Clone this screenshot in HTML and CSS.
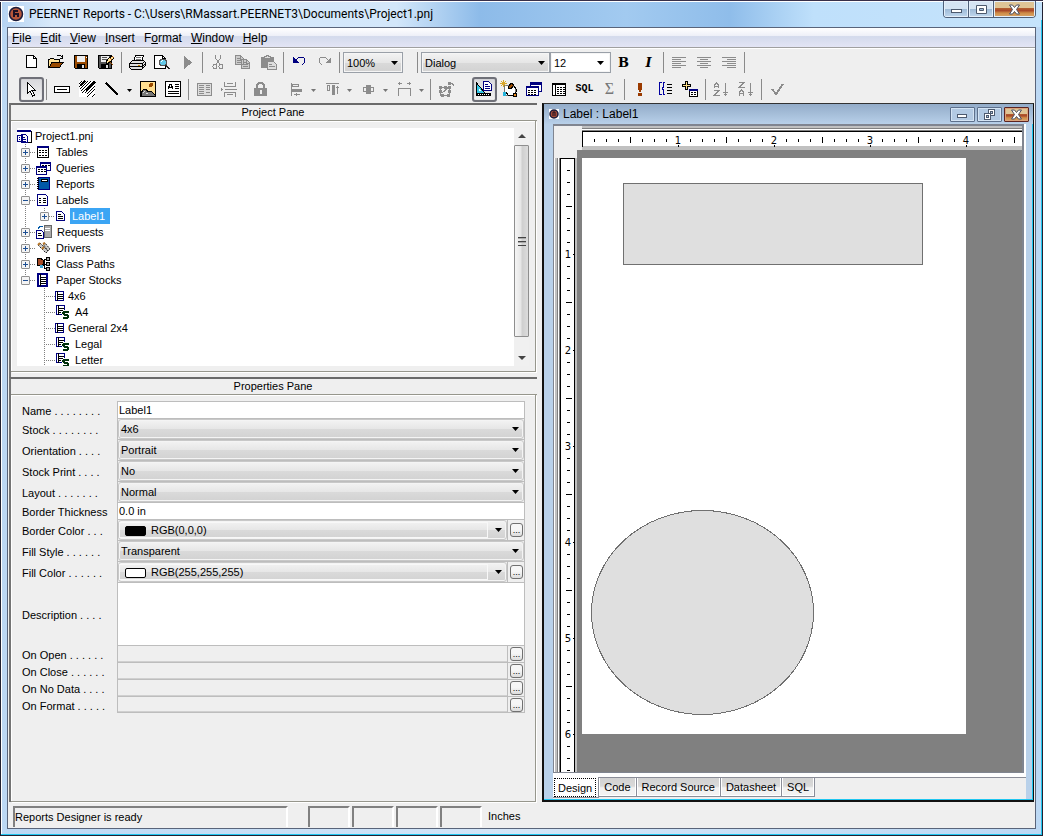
FILE: index.html
```html
<!DOCTYPE html>
<html lang="en">
<head>
<meta charset="utf-8">
<title>PEERNET Reports</title>
<link rel="stylesheet" href="styles.css">
</head>
<body>
<header class="titlebar">
  <svg class="app-logo" width="16" height="16" viewBox="0 0 16 16"><rect width="16" height="16" fill="#fff"/><circle cx="8" cy="8" r="6.5" fill="#b5563a" stroke="#1b1c3c" stroke-width="1.5"/><path d="M6 11V5h4M6 8h4v3" fill="none" stroke="#1b1024" stroke-width="2"/></svg>
  <h1 class="title">PEERNET Reports - C:\Users\RMassart.PEERNET3\Documents\Project1.pnj</h1>
  <div class="win-buttons">
    <button class="win-btn" aria-label="Minimize"><svg width="13" height="9" viewBox="0 0 13 9"><rect x="1.5" y="4.500" width="10" height="3" fill="#fff" stroke="#4d5a6e"/></svg></button>
    <button class="win-btn" aria-label="Maximize"><svg width="13" height="11" viewBox="0 0 13 11"><path d="M1.500 1.500h10v8h-10zM4.500 4.500v2h4v-2z" fill="#fff" fill-rule="evenodd" stroke="#4d5a6e"/></svg></button>
    <button class="win-btn close" aria-label="Close"><svg width="13" height="11" viewBox="0 0 13 11"><path d="M1.500 1h3l2 2.500L8.500 1h3L8.500 5.500l3 4.500h-3l-2-2.500-2 2.500h-3l3-4.500z" fill="#fff" stroke="#4d5060"/></svg></button>
  </div>
</header>

<main class="app">
  <nav class="menubar">
    <a href="#"><u>F</u>ile</a><a href="#"><u>E</u>dit</a><a href="#"><u>V</u>iew</a><a href="#"><u>I</u>nsert</a><a href="#">F<u>o</u>rmat</a><a href="#"><u>W</u>indow</a><a href="#"><u>H</u>elp</a>
  </nav>

  <div class="toolbars">
    <div class="toolbar">
      <button class="tool" aria-label="New"><svg class="ic" viewBox="0 0 19 19"><path d="M4.500 2.500h7l3 3v9h-10z" fill="#fff" stroke="#000"/><path d="M11.500 2.500v3h3" fill="none" stroke="#000"/></svg></button>
      <button class="tool" aria-label="Open"><svg class="ic" viewBox="0 0 19 19"><path d="M1.500 14V6.500h1l1-1h3l1 1h5V9" fill="#ffe39a" stroke="#000"/><path d="M2 14.500l3-5h11l-3.500 5z" fill="#9a4a00" stroke="#000"/><path d="M9.500 3.500l1-1h3l2 2M15.500 2v3h-3" fill="none" stroke="#000"/></svg></button>
      <button class="tool" aria-label="Save"><svg class="ic" viewBox="0 0 19 19"><path d="M2.500 2.500h13v13h-12l-1-1z" fill="#9a4a00" stroke="#000"/><rect x="5" y="3" width="8" height="6" fill="#eee"/><rect x="5" y="11" width="8" height="5"/><rect x="10" y="12" width="2" height="3" fill="#ddd"/><rect x="14" y="4" width="1" height="1" fill="#fff"/></svg></button>
      <button class="tool" aria-label="Save as"><svg class="ic" viewBox="0 0 19 19"><path d="M1.500 2.500h13v13h-12l-1-1z" fill="#555" stroke="#000"/><rect x="4" y="3" width="8" height="6" fill="#eee"/><path d="M5 4.500h5M5 6.500h5" stroke="#555"/><rect x="4" y="11" width="8" height="5"/><rect x="9" y="12" width="2" height="3" fill="#ddd"/><path d="M9 9l2-3 4-3 2 2-4 4-3 2z" fill="#ffe39a" stroke="#000"/><path d="M13 5l2 2M15 3l2 2M12 8l4 4" stroke="#9a4a00"/></svg></button>
      <span class="sep"></span>
      <button class="tool" aria-label="Print"><svg class="ic" viewBox="0 0 19 19"><path d="M5.500 8.500l2-6h8l-2 6z" fill="#fff" stroke="#000"/><path d="M8 4.500h5M7.500 6.500h5" stroke="#777"/><path d="M1.500 10.500l3-3h11l1.500 1.500v4l-3 3H3l-1.500-1.500z" fill="#ddd" stroke="#000"/><path d="M2 10.500h12l3-2M2 13.500h12l3-2M14.500 10v5" fill="none" stroke="#000"/><rect x="10" y="11.500" width="2" height="1" fill="#c80"/></svg></button>
      <button class="tool" aria-label="Print preview"><svg class="ic" viewBox="0 0 19 19"><path d="M1.500 2.500h8l3 3v10h-11z" fill="#fff" stroke="#000"/><path d="M9.500 2.500v3h3" fill="none" stroke="#000"/><circle cx="10" cy="9.500" r="3.500" fill="#62c8e8" stroke="#555"/><path d="M8 9l2-2" stroke="#fff"/><path d="M12.500 12l4 4" stroke="#222" stroke-width="2"/></svg></button>
      <button class="tool" aria-label="Run"><svg class="ic" viewBox="0 0 19 19"><path d="M6 3l8 6.500L6 16z" fill="#8c8c8c"/></svg></button>
      <span class="sep"></span>
      <button class="tool" aria-label="Cut"><svg class="ic dim" viewBox="0 0 19 19"><path d="M6.500 2v3l4 6M11.500 2v3l-4 6"/><circle cx="6" cy="13.500" r="2"/><circle cx="12" cy="13.500" r="2"/></svg></button>
      <button class="tool" aria-label="Copy"><svg class="ic dim" viewBox="0 0 19 19"><path d="M1.500 2.500h5l3 3v6h-8zM7.500 6.500h5l3 3v6h-8z" fill="#ccc"/><path d="M3 5.500h3M3 7.500h4M3 9.500h4M9 9.500h3M9 11.500h5M9 13.500h5M6.500 3v3h3M12.500 7v3h3"/></svg></button>
      <button class="tool" aria-label="Paste"><svg class="ic dim" viewBox="0 0 19 19"><path d="M2.500 4.500h12v10h-12z" fill="#8c8c8c"/><path d="M5.500 5V3.500h1.500l1-1h1l1 1h1.500V5z" fill="#ddd"/><path d="M8.500 8.500h6l3 3v5h-9z" fill="#ddd"/><path d="M10 11.500h3M10 13.500h6"/></svg></button>
      <span class="sep"></span>
      <button class="tool" aria-label="Undo"><svg class="ic" viewBox="0 0 19 19"><path d="M3 4v6h6z" fill="#000080"/><path d="M5 8l3-3 3-1 3 1 1 2-1 3-2 2" fill="none" stroke="#000080"/></svg></button>
      <button class="tool" aria-label="Redo"><svg class="ic dim" viewBox="0 0 19 19"><path d="M16 4v6h-6z" fill="#8c8c8c" stroke="none"/><path d="M14 8l-3-3-3-1-3 1-1 2 1 3 2 2"/></svg></button>
      <span class="sep"></span>
      <select class="combo zoom-combo" aria-label="Zoom"><option>100%</option></select>
      <span class="sep"></span>
      <select class="combo font-combo" aria-label="Font"><option>Dialog</option></select>
      <select class="combo size-combo" aria-label="Font size"><option>12</option></select>
      <button class="tool bold">B</button>
      <button class="tool italic">I</button>
      <span class="sep"></span>
      <button class="tool" aria-label="Align left"><svg class="ic dim" viewBox="0 0 19 19"><path d="M2 4.500h14M2 6.500h9M2 8.500h14M2 10.500h9M2 12.500h14M2 14.500h9"/></svg></button>
      <button class="tool" aria-label="Align center"><svg class="ic dim" viewBox="0 0 19 19"><path d="M2 4.500h14M5 6.500h8M2 8.500h14M5 10.500h8M2 12.500h14M5 14.500h8"/></svg></button>
      <button class="tool" aria-label="Align right"><svg class="ic dim" viewBox="0 0 19 19"><path d="M2 4.500h14M7 6.500h9M2 8.500h14M7 10.500h9M2 12.500h14M7 14.500h9"/></svg></button>
      <span class="sep"></span>
    </div>
    <div class="toolbar">
      <button class="tool on" aria-label="Select"><svg class="ic" viewBox="0 0 19 19"><path d="M5.500 2.500v11l2.500-2.500 2.500 5 2-1-2.500-4.500h3.500z" fill="#fff" stroke="#000"/></svg></button>
      <span class="sep"></span>
      <button class="tool" aria-label="Field"><svg class="ic" viewBox="0 0 19 19"><path d="M1.500 6.500h15v6h-15z" fill="#fff" stroke="#000"/><path d="M4 9.500h10" stroke="#000"/></svg></button>
      <button class="tool" aria-label="Shape"><svg class="ic" viewBox="0 0 19 19"><rect x="1" y="1" width="16" height="16" fill="#fff"/><path d="M1 4l3-3M1 7l6-6M2 9l8-8M3 11L13 1M4 13L16 1M7 13L17 3M9 14l8-8M11 15l6-6M14 17l3-3M9 17l3-3" stroke="#000" stroke-width="1.300"/><path d="M7 1L2 6M17 2L8 11" stroke="#000" stroke-width="2"/></svg></button>
      <button class="tool" aria-label="Line"><svg class="ic" viewBox="0 0 19 19"><path d="M3 3l12 12" stroke="#000" stroke-width="2"/></svg></button>
      <button class="drop" aria-label="Line options"></button>
      <button class="tool" aria-label="Image"><svg class="ic" viewBox="0 0 19 19"><rect x="1.500" y="1.500" width="15" height="15" fill="#ffdf91" stroke="#000"/><circle cx="12" cy="5" r="2" fill="#9a4a00"/><path d="M2 13l3-4 2 0 2 3 3-1 4 4v1H2z" fill="#777" stroke="#000"/><path d="M4 13l2-2M7 14l2-1" stroke="#ddd"/></svg></button>
      <button class="tool" aria-label="Text"><svg class="ic" viewBox="0 0 19 19"><rect x="1.500" y="1.500" width="15" height="15" fill="#fff" stroke="#000"/><path d="M4 9l2-5h1l2 5M5 7.500h3M11 4.500h4M11 6.500h4M11 8.500h4M4 11.500h11M4 13.500h11" fill="none" stroke="#000"/></svg></button>
      <span class="sep"></span>
      <button class="tool" aria-label="Form"><svg class="ic dim" viewBox="0 0 19 19"><rect x="2.500" y="3.500" width="14" height="12" fill="#ddd"/><path d="M4 5.500h5M4 7.500h5M4 9.500h5M4 11.500h5M4 13.500h5M11 5.500h4M11 7.500h4M11 9.500h4M11 12.500h4"/></svg></button>
      <button class="tool" aria-label="Page break"><svg class="ic dim" viewBox="0 0 19 19"><path d="M4.500 2v4.500h11V2M4.500 17v-4.500h11V17M7 3.500h6M7 14.500h6M5 9.500h12"/><path d="M1 7v5l2-2.500z" fill="#8c8c8c" stroke="none"/></svg></button>
      <span class="sep"></span>
      <button class="tool" aria-label="Lock"><svg class="ic dim" viewBox="0 0 19 19"><path d="M6 8V5l2-2h3l2 2v3" stroke-width="2"/><rect x="3" y="8" width="13" height="8" fill="#8c8c8c" stroke="none"/><rect x="9" y="10" width="2" height="4" fill="#eee" stroke="none"/></svg></button>
      <span class="gap"></span>
      <button class="tool" aria-label="Align edges"><svg class="ic dim" viewBox="0 0 19 19"><path d="M4.500 3v13"/><rect x="5.500" y="4.500" width="6" height="2"/><rect x="5.500" y="9.500" width="9" height="2" fill="#8c8c8c"/><path d="M7 14.500h6M9 13v3"/></svg></button>
      <button class="drop off" aria-label="Align options"></button>
      <button class="tool" aria-label="Align tops"><svg class="ic dim" viewBox="0 0 19 19"><path d="M3 3.500h13"/><rect x="4.500" y="5.500" width="2" height="5"/><rect x="9.500" y="5.500" width="2" height="9" fill="#8c8c8c"/><path d="M14.500 6v8M13 7.500h3"/></svg></button>
      <button class="drop off" aria-label="Top options"></button>
      <button class="tool" aria-label="Center"><svg class="ic dim" viewBox="0 0 19 19"><rect x="4.500" y="7.500" width="10" height="4"/><rect x="7.500" y="5.500" width="4" height="8" fill="#8c8c8c"/></svg></button>
      <button class="drop off" aria-label="Center options"></button>
      <button class="tool" aria-label="Space"><svg class="ic dim" viewBox="0 0 19 19"><path d="M3.500 16V8.500h12V16M3 3.500h4M12 3.500h4M4.500 2v3M14.500 2v3"/></svg></button>
      <button class="drop off" aria-label="Space options"></button>
      <span class="sep"></span>
      <button class="tool" aria-label="Group"><svg class="ic dim" viewBox="0 0 19 19"><path d="M3.500 7.500h9v8h-9zM5 13l6-5"/><path d="M2 6h3v3H2zM7 6h3v3H7zM11 6h3v3h-3zM2 10h3v3H2zM11 10h3v3h-3zM4 14h3v3H4zM10 14h3v3h-3zM11 2h3v3h-3z" fill="#8c8c8c" stroke="none"/><path d="M11 3.500h4l2 2"/></svg></button>
      <span class="gap wide"></span>
      <button class="tool on" aria-label="Design view"><svg class="ic" viewBox="0 0 19 19"><path d="M1.500 3l9 10.500h-9z" fill="#35c7e6" stroke="#000"/><path d="M4 9v2h2z" fill="#fff"/><rect x="1" y="13" width="15" height="3"/><path d="M3 14.500h12" stroke="#fff" stroke-dasharray="1 1"/><path d="M8.500 1.500h5l3 3v6h-8z" fill="#fff" stroke="#000080"/><path d="M10 4.500h3M10 6.500h5M10 8.500h5" stroke="#000080"/></svg></button>
      <button class="tool" aria-label="Wizard"><svg class="ic" viewBox="0 0 19 19"><path d="M4.500 5.500h8l3 3v7h-11z" fill="#fff" stroke="#777"/><path d="M1 1l5 5M6 1L1 6M3.500 0v7M0 3.500h7" stroke="#d9a72a"/><path d="M8 8l3-5 3 2-3 4z" fill="#9a4a00" stroke="#000"/><path d="M14 6l2 3v3l-3 3H8l-2-3" fill="none" stroke="#000"/><rect x="3" y="12" width="3" height="4" fill="#25b4dc"/><rect x="13" y="13" width="3" height="3" fill="#e68a1e" stroke="#000"/></svg></button>
      <button class="tool" aria-label="Queries view"><svg class="ic" viewBox="0 0 19 19"><rect x="5.500" y="2.500" width="11" height="9" fill="#fff" stroke="#000080"/><rect x="5" y="2" width="12" height="3" fill="#000080"/><rect x="1.500" y="6.500" width="12" height="9" fill="#fff" stroke="#000080"/><rect x="1" y="6" width="13" height="2" fill="#000080"/><path d="M3 10.500h9M3 12.500h9M3 14.500h9" stroke="#000" stroke-dasharray="2 1"/></svg></button>
      <button class="tool" aria-label="Datasheet view"><svg class="ic" viewBox="0 0 19 19"><rect x="2.500" y="3.500" width="13" height="12" fill="#fff" stroke="#000"/><path d="M2 4.500h14M5.500 4v12" stroke="#000"/><path d="M7 7.500h8M7 9.500h8M7 11.500h8M7 13.500h8" stroke="#000" stroke-dasharray="2 1"/></svg></button>
      <button class="tool sql">SQL</button>
      <button class="tool sigma">Σ</button>
      <span class="sep"></span>
      <button class="tool" aria-label="Execute"><svg class="ic" viewBox="0 0 19 19"><path d="M7 3h4v5l-1 4H8L7 8zM7 13h4v3H7z" fill="#9a3a00"/></svg></button>
      <button class="tool" aria-label="Expressions"><svg class="ic" viewBox="0 0 19 19"><path d="M6 2.500H3.500v12H6M9 2.500H7.500v4l-1 2 1 2v4H9" fill="none" stroke="#0000a0"/><path d="M11 4.500h5M11 7.500h5M11 10.500h5M11 13.500h5" stroke="#000"/></svg></button>
      <button class="tool" aria-label="Add table"><svg class="ic" viewBox="0 0 19 19"><path d="M4.500 1.500h2v3h3v2h-3v3h-2v-3h-3v-2h3z" fill="#ffe08a" stroke="#000"/><rect x="8.500" y="9.500" width="8" height="7" fill="#fff" stroke="#000"/><rect x="8" y="9" width="9" height="2" fill="#000080"/><path d="M10 12.500h5M10 14.500h5" stroke="#000" stroke-dasharray="2 1"/></svg></button>
      <span class="sep"></span>
      <button class="tool" aria-label="Sort ascending"><svg class="ic dim" viewBox="0 0 19 19"><path d="M2.500 8V5l2-2 2 2v3M3 6.500h3M2 10.500h5l-5 5h6M13.500 3v13M11 12.500h5M12 14.500h3"/></svg></button>
      <button class="tool" aria-label="Sort descending"><svg class="ic dim" viewBox="0 0 19 19"><path d="M2.500 16v-4l2-2 2 2v4M3 13.500h3M2 2.500h5l-5 5h6M13.500 3v13M11 12.500h5M12 14.500h3"/></svg></button>
      <span class="sep"></span>
      <button class="tool" aria-label="Check"><svg class="ic dim" viewBox="0 0 19 19"><path d="M4 9l4 5L15 4" stroke-width="2"/></svg></button>
    </div>
  </div>

  <div class="workspace">
    <div class="panes">
      <section class="pane">
        <h2>Project Pane</h2>
        <div class="pane-body tree-body">
          <div class="tree">
            <div class="node root"><svg width="15" height="15" viewBox="0 0 15 15" class="px"><path d="M1 2.500h13v11H9" fill="none" stroke="#000"/><rect y="1" width="14" height="2" fill="#000080"/><path d="M.5 6.500h5v6h-5zM4.500 5.500h4l2 2v6h-6z" fill="#fff" stroke="#000080"/><path d="M6 8.500h2M6 10.500h3M6 12h3M2 8.500h1M2 10.500h1" stroke="#000080"/></svg><span>Project1.pnj</span></div>
            <ul>
              <li><div class="node"><button class="exp plus" aria-label="Expand"></button><i></i><svg width="16" height="14" viewBox="0 0 16 14" class="px"><rect x="1.500" y="1.500" width="11" height="11" fill="#fff" stroke="#000"/><rect x="1" y="1" width="12" height="2" fill="#000080"/><path d="M3 5h9M3 7.500h9M3 10h9" stroke="#000" stroke-dasharray="2 1"/></svg><span>Tables</span></div></li>
              <li><div class="node"><button class="exp plus" aria-label="Expand"></button><i></i><svg width="16" height="14" viewBox="0 0 16 14" class="px"><rect x="4.500" y="1.500" width="10" height="8" fill="#fff" stroke="#000080"/><rect x="4" y="1" width="11" height="2" fill="#000080"/><path d="M6 4.500h8" stroke="#000" stroke-dasharray="2 1"/><rect x=".5" y="5.500" width="10" height="8" fill="#fff" stroke="#000080"/><rect y="5" width="11" height="2" fill="#000080"/><path d="M2 8.500h8M2 10.500h8" stroke="#000" stroke-dasharray="2 1"/></svg><span>Queries</span></div></li>
              <li><div class="node"><button class="exp plus" aria-label="Expand"></button><i></i><svg width="16" height="14" viewBox="0 0 16 14" class="px"><rect x="2.500" y=".5" width="11" height="12" fill="#0058a8" stroke="#000080"/><path d="M1.500 1v12" stroke="#000" stroke-width="2" stroke-dasharray="1 1"/><rect x="5" y="2" width="7" height="3" fill="#000"/><path d="M6 3.500h5" stroke="#fff"/></svg><span>Reports</span></div></li>
              <li><div class="node"><button class="exp minus" aria-label="Collapse"></button><i></i><svg width="16" height="14" viewBox="0 0 16 14" class="px"><path d="M1.500 1.500h8l2 2v9h-10z" fill="#fff" stroke="#000080"/><path d="M3 5.500h2M3 7.500h2M3 9.500h2M7 5.500h3M7 7.500h3M7 9.500h3" stroke="#000"/></svg><span>Labels</span></div>
                <ul>
                  <li><div class="node"><button class="exp plus" aria-label="Expand"></button><i></i><svg width="13" height="12" viewBox="0 0 13 12" class="px"><path d="M1.500 1.500h5l3 3v6h-8z" fill="#fff" stroke="#000080"/><path d="M3 4.500h3M3 6.500h5M3 8.500h5" stroke="#000"/></svg><span class="sel">Label1</span></div></li>
                </ul></li>
              <li><div class="node"><button class="exp plus" aria-label="Expand"></button><i></i><svg width="17" height="16" viewBox="0 0 17 16" class="px"><rect x="8" y="1" width="7" height="12" fill="#aaa" stroke="#666"/><path d="M9 4h5M9 6h5" stroke="#fff"/><path d="M2 5l2-3h3" fill="none" stroke="#0058a8"/><path d="M.5 6.500h5l2 2v6h-7z" fill="#fff" stroke="#000080"/><path d="M2 9.500h3M2 11.500h4" stroke="#000"/></svg><span>Requests</span></div></li>
              <li><div class="node"><button class="exp plus" aria-label="Expand"></button><i></i><svg width="16" height="14" viewBox="0 0 16 14"><path d="M2 4l2-2 8 8-2 2zM7 3l2-1 5 6-2 2z" fill="#ccc" stroke="#222" stroke-dasharray="2 1"/><path d="M2 4l2-2M6 8l2-2M7 3l2-1" stroke="#b5762a" stroke-width="2"/></svg><span>Drivers</span></div></li>
              <li><div class="node"><button class="exp plus" aria-label="Expand"></button><i></i><svg width="16" height="14" viewBox="0 0 16 14" class="px"><path d="M1 2l3-1 3 2v5H1z" fill="#a64b26" stroke="#000"/><path d="M6 7.500h5M8.500 2v9.500h3M8.500 2.500h3" fill="none" stroke="#000"/><rect x="10.500" y=".5" width="3" height="3" fill="#aaa" stroke="#000"/><rect x="10.500" y="5.500" width="3" height="3" fill="#aaa" stroke="#000"/><rect x="10.500" y="10.500" width="3" height="3" fill="#aaa" stroke="#000"/><rect x="4" y="8" width="3" height="3" fill="#3fa9d8"/></svg><span>Class Paths</span></div></li>
              <li><div class="node"><button class="exp minus" aria-label="Collapse"></button><i></i><svg width="16" height="14" viewBox="0 0 16 14" class="px"><rect x="2" y="1" width="9" height="12" fill="#fff" stroke="#000080" stroke-width="2"/><path d="M4.500 1v12M5 4.500h5M5 6.500h5M5 8.500h5M5 10.500h5" stroke="#000"/></svg><span>Paper Stocks</span></div>
                <ul class="more">
                  <li><div class="node leaf"><i></i><svg width="9" height="10" viewBox="0 0 9 10" class="px"><rect x=".5" y=".5" width="8" height="9" fill="#fff" stroke="#000080"/><path d="M2.500 0v10M3 3.500h5M3 5.500h5M3 7.500h5" stroke="#000"/></svg><span>4x6</span></div></li>
                  <li><div class="node leaf"><i></i><svg width="16" height="15" viewBox="0 0 16 15" class="px"><rect x="1.500" y=".5" width="8" height="9" fill="#fff" stroke="#000080"/><path d="M3.500 0v10M4 3.500h5M4 5.500h5M4 7.500h5" stroke="#000"/><path d="M13.500 6.500h-4l-1.500 1.500 1.500 1.500h2.500l1.500 1.500-1.500 2H8" fill="none" stroke="#fff" stroke-width="3"/><path d="M13.500 6.500h-4l-1.500 1.500 1.500 1.500h2.500l1.500 1.500-1.500 2H8" fill="none" stroke="#00300a" stroke-width="2"/></svg><span>A4</span></div></li>
                  <li><div class="node leaf"><i></i><svg width="9" height="10" viewBox="0 0 9 10" class="px"><rect x=".5" y=".5" width="8" height="9" fill="#fff" stroke="#000080"/><path d="M2.500 0v10M3 3.500h5M3 5.500h5M3 7.500h5" stroke="#000"/></svg><span>General 2x4</span></div></li>
                  <li><div class="node leaf"><i></i><svg width="16" height="15" viewBox="0 0 16 15" class="px"><rect x="1.500" y=".5" width="8" height="9" fill="#fff" stroke="#000080"/><path d="M3.500 0v10M4 3.500h5M4 5.500h5M4 7.500h5" stroke="#000"/><path d="M13.500 6.500h-4l-1.500 1.500 1.500 1.500h2.500l1.500 1.500-1.500 2H8" fill="none" stroke="#fff" stroke-width="3"/><path d="M13.500 6.500h-4l-1.500 1.500 1.500 1.500h2.500l1.500 1.500-1.500 2H8" fill="none" stroke="#00300a" stroke-width="2"/></svg><span>Legal</span></div></li>
                  <li><div class="node leaf"><i></i><svg width="16" height="15" viewBox="0 0 16 15" class="px"><rect x="1.500" y=".5" width="8" height="9" fill="#fff" stroke="#000080"/><path d="M3.500 0v10M4 3.500h5M4 5.500h5M4 7.500h5" stroke="#000"/><path d="M13.500 6.500h-4l-1.500 1.500 1.500 1.500h2.500l1.500 1.500-1.500 2H8" fill="none" stroke="#fff" stroke-width="3"/><path d="M13.500 6.500h-4l-1.500 1.500 1.500 1.500h2.500l1.500 1.500-1.500 2H8" fill="none" stroke="#00300a" stroke-width="2"/></svg><span>Letter</span></div></li>
                </ul></li>
            </ul>
          </div>
          <div class="scrollbar">
            <svg class="scroll-arrow" width="8" height="4" viewBox="0 0 8 4"><path d="M0 4l4-4 4 4z" fill="#444"/></svg>
            <div class="thumb"><svg width="8" height="9" viewBox="0 0 8 9" class="px"><path d="M0 .5h8M0 4.500h8M0 8.500h8" stroke="#444"/><path d="M0 1.500h8M0 5.500h8" stroke="#aaa"/></svg></div>
            <svg class="scroll-arrow" width="8" height="4" viewBox="0 0 8 4"><path d="M0 0l4 4 4-4z" fill="#444"/></svg>
          </div>
        </div>
      </section>
      <section class="pane">
        <h2>Properties Pane</h2>
        <form class="pane-body props">
          <div class="row"><label for="name">Name . . . . . . . .</label><div class="cell"><input id="name" type="text" value="Label1"></div></div>
          <div class="row tall"><label for="stock">Stock . . . . . . . .</label><div class="cell"><select id="stock" class="pick"><option>4x6</option></select></div></div>
          <div class="row tall"><label for="orient">Orientation . . . .</label><div class="cell"><select id="orient" class="pick"><option>Portrait</option></select></div></div>
          <div class="row tall"><label for="print">Stock Print . . . .</label><div class="cell"><select id="print" class="pick"><option>No</option></select></div></div>
          <div class="row tall"><label for="layout">Layout . . . . . . .</label><div class="cell"><select id="layout" class="pick"><option>Normal</option></select></div></div>
          <div class="row"><label for="thick">Border Thickness</label><div class="cell"><input id="thick" type="text" value="0.0 in"></div></div>
          <div class="row tall"><label for="bcolor">Border Color . . .</label><div class="cell colour"><select id="bcolor" class="pick"><option>RGB(0,0,0)</option></select><span class="swatch black"></span></div><div class="cell more-cell"><button type="button" class="dots" aria-label="Choose border color">...</button></div></div>
          <div class="row tall"><label for="fstyle">Fill Style . . . . . .</label><div class="cell"><select id="fstyle" class="pick"><option>Transparent</option></select></div></div>
          <div class="row tall"><label for="fcolor">Fill Color . . . . . .</label><div class="cell colour"><select id="fcolor" class="pick"><option>RGB(255,255,255)</option></select><span class="swatch"></span></div><div class="cell more-cell"><button type="button" class="dots" aria-label="Choose fill color">...</button></div></div>
          <div class="row area"><label for="desc">Description . . . .</label><div class="cell"><textarea id="desc"></textarea></div></div>
          <div class="row"><label for="open">On Open . . . . . .</label><div class="cell"><input id="open" class="ro" type="text" readonly></div><div class="cell more-cell"><button type="button" class="dots" aria-label="Edit On Open">...</button></div></div>
          <div class="row"><label for="close">On Close . . . . . .</label><div class="cell"><input id="close" class="ro" type="text" readonly></div><div class="cell more-cell"><button type="button" class="dots" aria-label="Edit On Close">...</button></div></div>
          <div class="row"><label for="nodata">On No Data . . . .</label><div class="cell"><input id="nodata" class="ro" type="text" readonly></div><div class="cell more-cell"><button type="button" class="dots" aria-label="Edit On No Data">...</button></div></div>
          <div class="row"><label for="format">On Format . . . . .</label><div class="cell"><input id="format" class="ro" type="text" readonly></div><div class="cell more-cell"><button type="button" class="dots" aria-label="Edit On Format">...</button></div></div>
        </form>
      </section>
    </div>

    <section class="doc">
      <header class="doc-title">
        <svg width="10" height="10" viewBox="0 0 10 10"><rect width="10" height="10" fill="#fff"/><circle cx="5" cy="5" r="4" fill="#a64b36" stroke="#1b1c3c" stroke-width="1.500"/><path d="M4 7V3h2v4" fill="none" stroke="#1b1024"/></svg>
        <h2>Label : Label1</h2>
        <button class="doc-btn" aria-label="Minimize document"><svg width="13" height="9" viewBox="0 0 13 9"><rect x="1.500" y="4.500" width="9" height="3" fill="#fff" stroke="#4d5a6e"/></svg></button>
        <button class="doc-btn" aria-label="Restore document"><svg width="13" height="11" viewBox="0 0 13 11" class="px"><path d="M5.500.5h6v6h-6zM7.500 2.500v2h2v-2z" fill="#fff" fill-rule="evenodd" stroke="#4d5a6e"/><path d="M1.500 4.500h6v6h-6zM3.500 6.500v2h2v-2z" fill="#fff" fill-rule="evenodd" stroke="#4d5a6e"/></svg></button>
        <button class="doc-btn close" aria-label="Close document"><svg width="13" height="11" viewBox="0 0 13 11"><path d="M1.500 1h3l2 2.500L8.500 1h3L8.500 5.500l3 4.500h-3l-2-2.500-2 2.500h-3l3-4.500z" fill="#fff" stroke="#4d5060"/></svg></button>
      </header>
      <div class="doc-body">
        <div class="designer">
          <div class="corner"></div>
          <div class="ruler-top">
            <svg width="100%" height="16" class="px">
              <defs><pattern id="tx" width="96" height="16" patternUnits="userSpaceOnUse"><path d="M12.500 7v3M24.500 7v3M36.500 7v3M48.500 5v6M60.500 7v3M72.500 7v3M84.500 7v3M.5 13v2" stroke="#000"/></pattern></defs>
              <rect width="100%" height="14" fill="#fff"/><rect y="14" width="100%" height="2" fill="#c0c0c0"/><rect width="100%" height="15" fill="url(#tx)"/><path d="M.5 0v14" stroke="#000"/>
              <g class="num"><text x="96" y="12">1</text><text x="192" y="12">2</text><text x="288" y="12">3</text><text x="384" y="12">4</text></g>
            </svg>
          </div>
          <div class="ruler-left">
            <svg width="16" height="100%" class="px">
              <defs><pattern id="ty" width="16" height="96" patternUnits="userSpaceOnUse"><path d="M6 12.500h3M6 24.500h3M6 36.500h3M5 48.500h6M6 60.500h3M6 72.500h3M6 84.500h3M12 .5h2" stroke="#000"/></pattern></defs>
              <rect width="14" height="100%" fill="#fff"/><rect width="14" height="100%" fill="url(#ty)"/><path d="M0 .5h14" stroke="#000"/><rect x="13" width="1" height="100%"/><rect x="14" width="2" height="100%" fill="#c0c0c0"/>
              <g class="num"><text x="7" y="100">1</text><text x="7" y="196">2</text><text x="7" y="292">3</text><text x="7" y="388">4</text><text x="7" y="484">5</text><text x="7" y="580">6</text></g>
            </svg>
          </div>
          <div class="canvas">
            <svg class="page" width="384" height="576" viewBox="0 0 384 576">
              <rect width="384" height="576" fill="#fff"/>
              <rect x="41.500" y="25.500" width="299" height="81" fill="#dfdfdf" stroke="#707070" shape-rendering="crispEdges"/>
              <ellipse cx="120.500" cy="454.500" rx="111" ry="102" fill="#dfdfdf" stroke="#707070" shape-rendering="crispEdges"/>
            </svg>
          </div>
        </div>
        <div class="tabs">
          <button class="tab active"><span>Design</span></button><button class="tab">Code</button><button class="tab">Record Source</button><button class="tab">Datasheet</button><button class="tab">SQL</button>
        </div>
      </div>
    </section>
  </div>

  <footer class="status">
    <span class="well message">Reports Designer is ready</span>
    <span class="well"></span><span class="well"></span><span class="well"></span><span class="well"></span>
    <span class="units">Inches</span>
  </footer>
</main>
</body>
</html>
```
FILE: styles.css
```css
* { box-sizing: border-box; }

body {
  margin: 0;
  height: 100vh;
  display: flex;
  flex-direction: column;
  padding: 0 7px 7px;
  overflow: hidden;
  font: 11px/14px "Liberation Sans", Arial, sans-serif;
  color: #000;
  background:
    linear-gradient(#38304a, #38304a) 0 0 / 100% 1px no-repeat,
    linear-gradient(#fff, #fff) 0 1px / 100% 1px no-repeat,
    linear-gradient(#223, #223) 0 0 / 1px 100% no-repeat,
    linear-gradient(#223, #223) 100% 0 / 1px 100% no-repeat,
    linear-gradient(#223, #223) 0 100% / 100% 1px no-repeat,
    linear-gradient(#1fc6f0, #1fc6f0) right 1px top 20px / 1px 100% no-repeat,
    linear-gradient(#1fc6f0, #1fc6f0) 0 calc(100% - 1px) / 100% 1px no-repeat,
    linear-gradient(#fff, #fff) 1px 0 / 1px 100% no-repeat,
    linear-gradient(90deg, #b4d2f2 0, #d8e9fa 5%, #d3e7fa 38%, #8dbbe9 46%, #a2caf0 60%, #8fbdea 70%, #bfe0fb 78%, #c5e3fb 100%) 0 0 / 100% 27px no-repeat,
    linear-gradient(90deg, #bcd8f4, #d4e6f8 50%, #bcd8f4);
}

h1, h2 { margin: 0; font-weight: normal; }
button { font: inherit; color: inherit; margin: 0; padding: 0; border: 0; background: none; }
input, select, textarea { font: inherit; color: inherit; margin: 0; border: 0; border-radius: 0; }
.px { shape-rendering: crispEdges; }
svg { flex: none; display: block; }

.titlebar { flex: 0 0 27px; display: flex; align-items: center; padding-left: 1px; }
.title {
  flex: 1;
  margin-left: 5px;
  font: 12px/18px Roboto, sans-serif;
  white-space: nowrap;
  overflow: hidden;
}
.win-buttons {
  align-self: flex-start;
  display: flex;
  margin-top: 1px;
  border: 1px solid #4f5f78;
  border-top: 0;
  border-radius: 0 0 4px 4px;
  overflow: hidden;
}
.win-btn {
  width: 25px;
  height: 16px;
  display: grid;
  place-items: center;
  background: linear-gradient(#d5e4f3 50%, #9db9d6 50%, #c1d8ee);
  border-right: 1px solid #4f5f78;
  box-shadow: inset 0 0 0 1px #e4effa;
}
.win-btn.close { width: 41px; border: 0; }
.close, .doc-btn.close { background: linear-gradient(#dfc596 45%, #b4602f 45%, #a8482a 60%, #cf8d48 75%, #d9a76b); }

.app {
  flex: 1;
  min-height: 0;
  display: flex;
  flex-direction: column;
  border: 1px solid #59647a;
  background: #efefef;
}
.menubar {
  flex: 0 0 20px;
  display: flex;
  gap: 9px;
  padding: 2px 4px 0;
  font-size: 12px;
  line-height: 16px;
  background: linear-gradient(#fff 0, #eef0f8 40%, #d3daec 45%, #e3e5f5 100%);
  border-bottom: 1px solid #a0a0a0;
}
.menubar a { color: #000; text-decoration: none; }

.toolbars { flex: none; padding: 1px 0 1px 11px; border-top: 1px solid #fff; }
.toolbar { display: flex; align-items: center; height: 26px; }
.toolbar:first-child { margin-bottom: 1px; height: 25px; }
.tool { flex: none; width: 25px; height: 25px; display: grid; place-items: center; }
.tool.on {
  border: 2px solid #6f7078;
  border-radius: 3px;
  background: linear-gradient(#d8d8dc, #f2f2f2);
  box-shadow: inset 0 0 1px #999;
}
.ic { width: 19px; height: 19px; shape-rendering: crispEdges; }
.dim { fill: none; stroke: #8c8c8c; }
.sep { flex: none; width: 6px; height: 21px; background: linear-gradient(#8a8a8a, #8a8a8a) 2px 0 / 1px 100% no-repeat; }
.gap { flex: none; width: 11px; }
.gap.wide { width: 13px; }
.drop { flex: none; width: 11px; height: 25px; background: url("data:image/svg+xml,%3Csvg xmlns='http://www.w3.org/2000/svg' width='5' height='3'%3E%3Cpath d='M0 0h5L2.500 3z'/%3E%3C/svg%3E") 2px 12px no-repeat; }
.drop.off { opacity: .5; }
.bold { font: bold 13px/20px "DejaVu Serif", serif; }
.italic { font: italic bold 13px/20px "DejaVu Serif", serif; }
.sql { font: bold 10px/20px "Liberation Mono", monospace; }
.sigma { font: 16px/20px "Liberation Serif", serif; color: #777; }

.combo, .pick {
  appearance: none;
  background:
    url("data:image/svg+xml,%3Csvg xmlns='http://www.w3.org/2000/svg' width='7' height='4'%3E%3Cpath d='M0 0h7L3.500 4z'/%3E%3C/svg%3E") right 4px center no-repeat,
    linear-gradient(#f3f3f3, #e6e6e6 50%, #dadada 50%, #d2d2d2);
}
.combo { flex: none; height: 21px; padding: 0 3px; border: 1px solid #9aa0a8; box-shadow: inset 0 0 0 1px #f5f5f5; }
.zoom-combo { width: 60px; margin-right: 12px; }
.font-combo { width: 129px; }
.size-combo { width: 61px; background: url("data:image/svg+xml,%3Csvg xmlns='http://www.w3.org/2000/svg' width='7' height='4'%3E%3Cpath d='M0 0h7L3.500 4z'/%3E%3C/svg%3E") right 6px center no-repeat #fff; }

.workspace {
  flex: 1;
  min-height: 0;
  display: grid;
  grid-template-columns: minmax(0, 534fr) minmax(0, 493fr);
  grid-template-rows: minmax(0, 1fr);
}
.panes {
  display: grid;
  grid-template-rows: minmax(0, 275fr) minmax(0, 426fr);
  padding-left: 1px;
  margin-right: 5px;
}
.pane {
  display: flex;
  flex-direction: column;
  min-height: 0;
  border-top: 2px solid #6a6a6a;
  border-left: 2px solid #747474;
  background: #efefef;
}
.pane h2 { flex: none; padding-right: 2px; font-size: 11px; line-height: 15px; text-align: center; border-bottom: 1px solid #96968c; }
.pane-body { flex: 1; min-height: 0; margin: 0 1px 0 0; border-right: 1px solid #96968c; border-bottom: 1px solid #96968c; box-shadow: inset 1px 1px #fff, 1px 1px #fff; }
.pane:first-child .pane-body { margin-bottom: 5px; }

.tree-body { display: flex; padding: 7px 6px 5px; }
.tree { flex: 1; overflow: hidden; background: #fff; }
.tree ul { list-style: none; margin: 0; padding: 0 0 0 4px; }
.tree ul ul { padding-left: 19px; }
.tree li { background: repeating-linear-gradient(#808080 0 1px, transparent 1px 2px) 4px 0 / 1px 100% no-repeat; }
.tree li:last-child { background-size: 1px 8px; }
.tree .more li:last-child { background-size: 1px 100%; }
.node { display: flex; align-items: center; height: 16px; }
.node span { padding: 0 2px; line-height: 15px; margin-left: 2px; white-space: nowrap; }
.root span { margin-left: 1px; }
.node i { width: 6px; height: 1px; background: repeating-linear-gradient(90deg, #808080 0 1px, transparent 1px 2px); }
.leaf i { width: 9px; margin-left: 6px; }
.node .sel { background: #3ba5f4; color: #fff; line-height: 16px; padding-right: 5px; }
.exp {
  width: 9px;
  height: 9px;
  border: 1px solid #919191;
  border-radius: 1px;
  background: linear-gradient(#1d4f93, #1d4f93) center / 5px 1px no-repeat, #f4f4f4;
}
.exp.plus { background: linear-gradient(#1d4f93, #1d4f93) center / 5px 1px no-repeat, linear-gradient(#1d4f93, #1d4f93) center / 1px 5px no-repeat, #f4f4f4; }

.scrollbar { flex: 0 0 15px; display: flex; flex-direction: column; align-items: center; background: #f0f0f0; }
.scroll-arrow { margin: 6px 0; }
.thumb {
  flex: 1;
  width: 100%;
  margin: 1px 0 13px;
  display: grid;
  place-items: center;
  border: 1px solid #8e8e8e;
  border-radius: 1px;
  background: linear-gradient(90deg, #f5f5f5, #e6e6e6 45%, #cfcfcf 55%, #dcdcdc);
}

.props { padding: 6px 10px 0 11px; }
.row { display: flex; align-items: stretch; height: 17px; }
.row.tall { height: 21px; }
.row.area { height: 63px; }
.row label { flex: 0 0 95px; align-self: center; padding-top: 2px; white-space: nowrap; }
.cell { flex: 1; min-width: 0; display: flex; position: relative; border: solid #bdbdbd; border-width: 1px 1px 0; }
.cell + .cell { border-left: 0; }
.row:last-child .cell { border-bottom-width: 1px; }
.cell input, .cell textarea, .cell select { flex: 1; min-width: 0; width: 100%; padding: 0 1px; background-color: #fff; }
.cell textarea { resize: none; }
.cell .ro { background: #efefef; border-bottom: 1px solid #d0d0d0; }
.cell .pick { padding: 0 2px; border: 1px solid #c8c8c8; border-radius: 3px; box-shadow: inset 0 0 0 1px #f4f4f4; }
.cell.colour .pick { padding-left: 32px; }
.colour::after { content: ""; position: absolute; left: 1px; right: 19px; top: 2px; bottom: 2px; border: 1px solid #f8f8f8; pointer-events: none; }
.swatch { position: absolute; left: 7px; top: 6px; width: 21px; height: 10px; border: 1px solid #000; border-radius: 2px; background: #fff; }
.swatch.black { background: #000; }
.more-cell { flex: 0 0 17px; align-items: center; justify-content: flex-end; padding-right: 1px; background: #efefef; }
.dots {
  width: 13px;
  height: 14px;
  border: 1px solid #707070;
  border-radius: 3px;
  font-size: 9px;
  line-height: 12px;
  background: linear-gradient(#f6f6f6 45%, #dcdcdc);
}

.doc {
  display: flex;
  flex-direction: column;
  min-height: 0;
  margin-right: 1px;
  padding: 0 7px 1px 9px;
  border: 1px solid #111;
  border-left-width: 2px;
  border-bottom-width: 2px;
  border-top-color: #333;
  background: #b9d1ea;
  box-shadow: inset -1px -1px #1fc6f0;
}
.doc-title {
  flex: 0 0 20px;
  display: flex;
  align-items: center;
  margin: 0 -7px 0 -9px;
  padding: 0 4px 0 5px;
  background: linear-gradient(#93acc9, #b8d0e9);
}
.doc-title h2 { flex: 1; margin-left: 4px; font-size: 12px; line-height: 16px; }
.doc-btn {
  width: 25px;
  height: 15px;
  margin-left: 2px;
  display: grid;
  place-items: center;
  border: 1px solid #5d708c;
  border-radius: 1px;
  box-shadow: inset 0 0 0 1px #d4e4f4;
  background: #b3cae3;
}
.doc-btn.close { border-color: #5c2420; box-shadow: inset 0 0 0 1px #dba37c; }
.doc-body { flex: 1; min-height: 0; display: flex; flex-direction: column; background: #efefef; }
.designer {
  flex: 1;
  min-height: 0;
  display: grid;
  grid-template-columns: 28px minmax(0, 1fr);
  grid-template-rows: 24px 8px minmax(0, 1fr);
  border: 2px solid #808590;
  border-left-width: 1px;
  border-bottom-width: 1px;
  margin-right: 2px;
  box-shadow: 2px 0 #fff;
  background: #808080;
}
.corner { grid-area: 1 / 1 / 3 / 2; background: linear-gradient(#808080, #808080) right bottom / 5px 8px no-repeat, #efefef; }
.ruler-top { grid-area: 1 / 2; padding-top: 6px; background: linear-gradient(#c0c0c0 0 2px, #808080 2px 3px, #fff 3px 4px, #808080 4px 5px, #000 5px 6px, #c0c0c0 6px); overflow: hidden; }
.ruler-left {
  grid-area: 3 / 1;
  padding-left: 7px;
  overflow: hidden;
  background: linear-gradient(90deg, #fff 0 1px, #c0c0c0 1px 3px, #808080 3px 4px, #fff 4px 5px, #808080 5px 6px, #000 6px 7px, #808080 7px);
}
.num { font: 10px "DejaVu Sans", sans-serif; text-anchor: middle; }
.num text { paint-order: stroke; stroke: #fff; stroke-width: 2px; }
.canvas { grid-area: 3 / 2; overflow: hidden; }

.tabs { flex: none; display: flex; align-items: flex-start; height: 26px; padding-top: 5px; background: linear-gradient(#fff 4px, #8a8d98 4px 5px, transparent 5px); }
.tab { height: 19px; padding: 0 5px; border: 1px solid #8a8d98; border-top: 0; border-left: 0; background: linear-gradient(#d2d2d2, #d9d9d9 45%, #f2f2f2 55%); box-shadow: inset 1px 0 #fff, inset -1px -1px #fff; }
.tab.active { height: 21px; margin-top: -1px; padding: 0 2px 0 1px; background: #fff; box-shadow: none; }
.tab.active span { display: block; padding: 2px 3px 0; line-height: 15px; border: 1px dotted #000; }

.status { flex: 0 0 24px; display: flex; align-items: stretch; padding: 4px 0 1px 5px; }
.well { width: 42px; margin-right: 2px; border: solid; border-width: 2px 2px 0 2px; border-color: #808080 #fff #fff #808080; }
.well.message { width: 275px; margin-right: 20px; line-height: 18px; }
.units { margin-left: 4px; line-height: 21px; }
```
